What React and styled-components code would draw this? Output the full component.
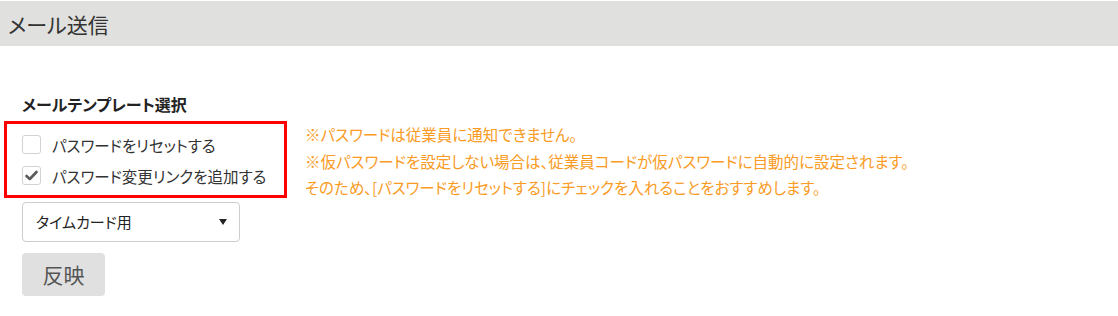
import React, { useState } from "react";
import styled, { createGlobalStyle } from "styled-components";

const Global = createGlobalStyle`
  html, body { margin: 0; padding: 0; background: #fff; }
  body {
    font-family: "Noto Sans CJK JP", "Noto Sans", sans-serif;
    color: #333;
  }
`;

const Page = styled.div`
  width: 1118px;
  height: 316px;
  padding-top: 1px;
  box-sizing: border-box;
`;

const TitleBar = styled.div`
  height: 45px;
  background: #e0e0de;
  display: flex;
  align-items: center;
  padding-left: 8px;
  font-size: 21px;
  color: #333;
  font-feature-settings: "palt";
`;

const Content = styled.div`
  padding-left: 4px;
  display: flex;
  flex-direction: column;
  align-items: flex-start;
`;

const SectionHeading = styled.div`
  margin: 48px 0 0 18px;
  font-size: 16px;
  font-weight: bold;
  line-height: 20px;
  color: #222;
  font-feature-settings: "palt";
`;

const OptionsRow = styled.div`
  display: flex;
  align-items: flex-start;
  gap: 18px;
  margin-top: 7px;
`;

const Highlight = styled.div`
  width: 283px;
  box-sizing: border-box;
  border: 3px solid #f00;
  padding: 5px 15px 4px;
`;

const CheckRow = styled.label`
  display: flex;
  align-items: center;
  height: 31px;
  font-size: 15.5px;
  color: #333;
  font-feature-settings: "palt";
  cursor: pointer;
`;

const Box = styled.span`
  width: 19px;
  height: 19px;
  box-sizing: border-box;
  border: 1px solid #d2d2d2;
  border-radius: 3px;
  background: #fff;
  display: flex;
  align-items: center;
  justify-content: center;
  margin-right: 11px;
  flex: none;
`;

const Notes = styled.div`
  color: #f99b24;
  font-size: 15.5px;
  line-height: 26.5px;
  font-feature-settings: "palt";
`;

const SelectBox = styled.div`
  margin: 1px 0 0 18px;
  width: 218px;
  height: 40px;
  box-sizing: border-box;
  border: 1px solid #cdcdcd;
  border-radius: 4px;
  display: flex;
  align-items: center;
  justify-content: space-between;
  padding: 0 12px 0 13px;
  font-size: 15px;
  color: #222;
  font-feature-settings: "palt";
`;

const Caret = styled.span`
  width: 0;
  height: 0;
  border-left: 4.5px solid transparent;
  border-right: 4.5px solid transparent;
  border-top: 6px solid #222;
`;

const ApplyButton = styled.button`
  margin: 11px 0 0 18px;
  width: 83px;
  height: 43px;
  border: none;
  border-radius: 4px;
  background: #e0e0e0;
  color: #555;
  font-family: inherit;
  font-size: 21px;
  font-weight: 400;
  padding: 0;
`;

function Check({ checked }) {
  return (
    <Box>
      {checked && (
        <svg width="13" height="11" viewBox="0 0 13 11">
          <path
            d="M1.5 6 L4.8 9 L11.5 2"
            fill="none"
            stroke="#5a5a5a"
            strokeWidth="2.6"
            strokeLinecap="round"
            strokeLinejoin="round"
          />
        </svg>
      )}
    </Box>
  );
}

export default function App() {
  const [reset, setReset] = useState(false);
  const [link, setLink] = useState(true);
  return (
    <Page>
      <Global />
      <TitleBar>メール送信</TitleBar>
      <Content>
        <SectionHeading>メールテンプレート選択</SectionHeading>
        <OptionsRow>
          <Highlight>
            <CheckRow onClick={() => setReset(!reset)}>
              <Check checked={reset} />
              パスワードをリセットする
            </CheckRow>
            <CheckRow onClick={() => setLink(!link)}>
              <Check checked={link} />
              パスワード変更リンクを追加する
            </CheckRow>
          </Highlight>
          <Notes>
            <div>※パスワードは従業員に通知できません。</div>
            <div>※仮パスワードを設定しない場合は、従業員コードが仮パスワードに自動的に設定されます。</div>
            <div>そのため、[パスワードをリセットする]にチェックを入れることをおすすめします。</div>
          </Notes>
        </OptionsRow>
        <SelectBox>
          <span>タイムカード用</span>
          <Caret />
        </SelectBox>
        <ApplyButton>反映</ApplyButton>
      </Content>
    </Page>
  );
}
